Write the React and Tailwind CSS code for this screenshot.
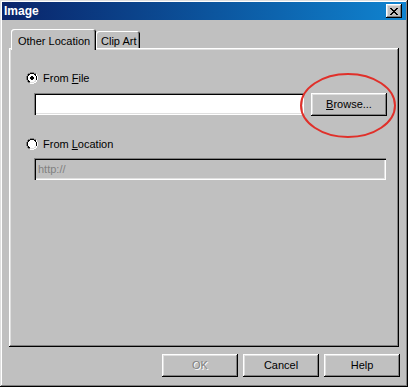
import React from 'react';

const raised = 'shadow-[inset_-1px_-1px_#000,inset_1px_1px_#fff,inset_-2px_-2px_#808080,inset_2px_2px_#dfdfdf]';
const sunken = 'shadow-[inset_1px_1px_#808080,inset_2px_2px_#000,inset_-1px_-1px_#fff,inset_-2px_-2px_#dfdfdf]';

const Radio = ({ checked }) => (
  <svg width="12" height="12" viewBox="0 0 12 12" className="shrink-0">
    <path d="M4 0h4v1h2v1h1v2h1v4h-1v2h-1v1h-2v1H4v-1H2v-1H1V8H0V4h1V2h1V1h2z" fill="#808080" />
    <path d="M4 1h4v1h2v2h1v4h-1v2H8v1H4v-1H2V8H1V4h1V2h2z" fill="#000" />
    <path d="M10 2v2h1v4h-1v2H8v1H4v1h4v-1h2v-1h1V8h1V4h-1V2z" fill="#fff" />
    <path d="M10 4v4h-1v1H8v1H4v1h4v-1h2V8h0V4z" fill="#dfdfdf" />
    <path d="M4 2h4v1h1v1h1v4h-1v1H8v1H4V9H3V8H2V4h1V3h1z" fill="#fff" />
    {checked && <path d="M5 4h2v1h1v2H7v1H5V7H4V5h1z" fill="#000" />}
  </svg>
);

const Button = ({ children, disabled }) => (
  <div className={`w-[76px] h-[23px] flex items-center justify-center bg-[#c0c0c0] ${raised} ${disabled ? 'text-[#808080] [text-shadow:1px_1px_#fff]' : 'text-black'}`}>
    {children}
  </div>
);

export default function App() {
  return (
    <div className="relative w-[408px] h-[387px] bg-[#c0c0c0] p-[2px] flex flex-col font-['Liberation_Sans',Arial,sans-serif] text-[11px] text-black shadow-[inset_-1px_-1px_#000,inset_1px_1px_#dfdfdf,inset_-2px_-2px_#808080,inset_2px_2px_#fff]">
      {/* title bar */}
      <div className="h-[18px] flex items-center justify-between pl-[2px] pr-[4px] bg-gradient-to-r from-[#0a246a] to-[#1084d0]">
        <span className="text-white font-bold text-[12px]">Image</span>
        <div className={`w-[16px] h-[14px] flex items-center justify-center bg-[#c0c0c0] ${raised}`}>
          <svg width="8" height="7" viewBox="0 0 8 7">
            <path d="M0 0h2v1h1v1h2V1h1V0h2v1H7v1H6v1H5v1h1v1h1v1h1v1H6V6H5V5H3v1H2v1H0V6h1V5h1V4h1V3H2V2H1V1H0z" fill="#000" />
          </svg>
        </div>
      </div>

      {/* tabs */}
      <div className="mt-[9px] ml-[9px] flex items-end h-[19px]">
        <div className="relative z-10 w-[85px] h-[21px] -mb-[2px] pt-[4px] pl-[7px] bg-[#c0c0c0] rounded-t-[3px] shadow-[inset_1px_1px_#fff,inset_-1px_0_#000,inset_-2px_0_#808080]">
          Other Location
        </div>
        <div className="w-[44px] h-[17px] pl-[5px] pt-[2px] bg-[#c0c0c0] rounded-t-[3px] shadow-[inset_1px_1px_#fff,inset_-1px_0_#000,inset_-2px_0_#808080]">
          Clip Art
        </div>
      </div>

      {/* panel */}
      <div className="ml-[7px] w-[390px] h-[299px] bg-[#c0c0c0] shadow-[inset_-1px_-1px_#000,inset_1px_1px_#fff,inset_-2px_-2px_#808080,inset_2px_2px_#dfdfdf] flex flex-col pl-[17px] pt-[24px]">
        <div className="flex items-center gap-[5px] h-[12px]">
          <Radio checked />
          <span>From <u>F</u>ile</span>
        </div>
        <div className="mt-[9px] ml-[8px] flex gap-[7px]">
          <div className={`w-[270px] h-[22px] bg-white ${sunken}`} />
          <Button><span><u>B</u>rowse...</span></Button>
        </div>
        <div className="mt-[22px] flex items-center gap-[5px] h-[12px]">
          <Radio />
          <span>From <u>L</u>ocation</span>
        </div>
        <div className={`mt-[8px] ml-[8px] w-[352px] h-[22px] flex items-center pl-[4px] text-[#808080] bg-[#c0c0c0] ${sunken}`}>
          http://
        </div>
      </div>

      {/* buttons */}
      <div className="mt-[7px] flex justify-end gap-[5px] pr-[6px]">
        <Button disabled>OK</Button>
        <Button>Cancel</Button>
        <Button>Help</Button>
      </div>

      {/* annotation */}
      <svg className="absolute left-[299px] top-[72px]" width="98" height="67" viewBox="0 0 98 67">
        <ellipse cx="49" cy="33.5" rx="47" ry="31.5" fill="none" stroke="#e0302a" strokeWidth="2" />
      </svg>
    </div>
  );
}
